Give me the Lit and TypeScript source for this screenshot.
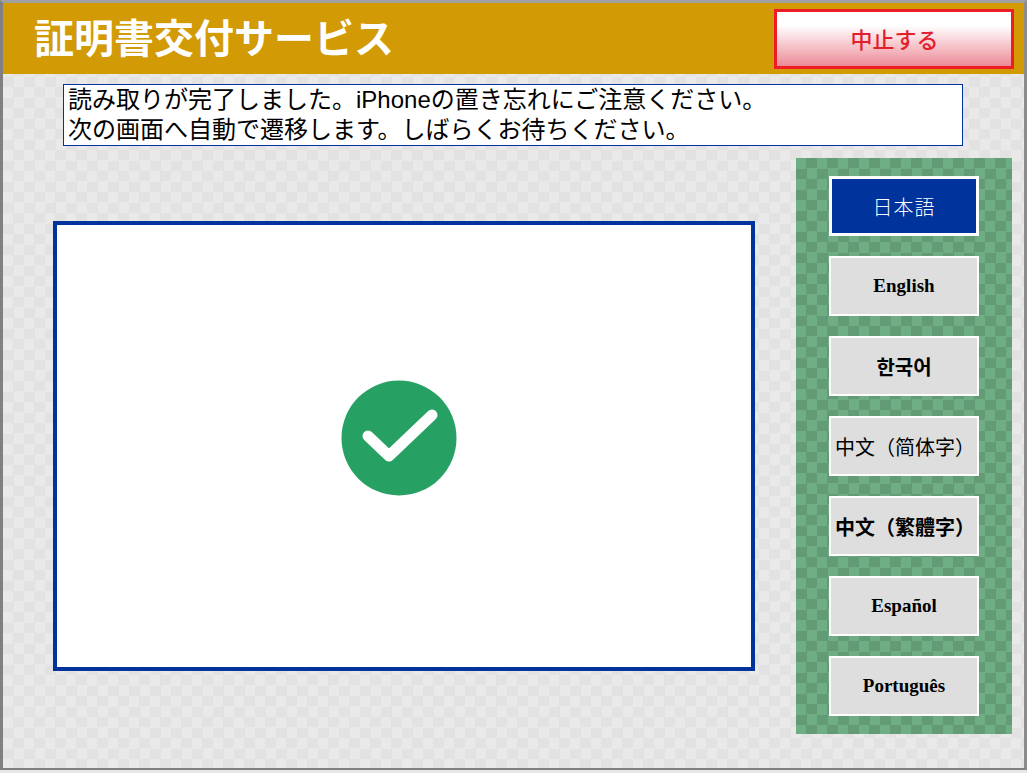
import { LitElement, html, css } from "lit";
import { customElement } from "lit/decorators.js";

const LANGS = [
  { t: "日本語", c: "sel ja" },
  { t: "English", c: "ser" },
  { t: "한국어", c: "ko" },
  { t: "中文（简体字）", c: "sc" },
  { t: "中文（繁體字）", c: "tc" },
  { t: "Español", c: "ser" },
  { t: "Português", c: "ser" },
];

@customElement("app-root")
export class AppRoot extends LitElement {
  static styles = css`
    :host { display: block; width: 1027px; height: 773px; overflow: hidden; background: #e8e8e8; }
    .frame {
      box-sizing: border-box; width: 1027px; height: 770px;
      border-style: solid; border-width: 3px 3px 2px 3px;
      border-color: #a0a0a0 #8c8c8c #808080 #808080;
      background-color: #e9e9e9;
      background-image: conic-gradient(#e2e2e2 25%, transparent 0 50%, #e2e2e2 0 75%, transparent 0);
      background-size: 21px 21px;
      display: flex; flex-direction: column;
      font-family: "Liberation Sans", "Noto Sans CJK JP", sans-serif;
    }
    .head {
      height: 71px; margin-top: 0; background: #d29a05; flex: none;
      display: flex; align-items: center; justify-content: space-between;
      padding: 0 10px 0 31px; box-sizing: border-box;
    }
    h1 { margin: 0; color: #fff; font-size: 40px; font-weight: 700; line-height: 1; font-family: "Liberation Sans", "Noto Sans CJK JP", sans-serif; }
    .stop {
      box-sizing: border-box; width: 240px; height: 60px; border: 3px solid #ee1c25;
      background: linear-gradient(#fff 0 25%, #ec8a96);
      color: #e2202c; font-size: 22px; font-weight: 500;
      display: flex; align-items: center; justify-content: center;
      font-family: "Noto Sans CJK JP", sans-serif; padding: 0;
    }
    .stop span { margin-top: -1px; margin-left: 1px; }
    .notice {
      box-sizing: border-box; width: 900px; height: 62px; margin: 10px 0 0 60px; flex: none;
      border: 1px solid #00339c; background: #fff; color: #000;
      font-size: 24px; line-height: 30px; padding: 0 4px;
      white-space: nowrap;
    }
    .body { display: flex; flex: 1; align-items: flex-start; }
    .main {
      box-sizing: border-box; width: 702px; height: 450px; margin: 75px 0 0 50px;
      border: 4px solid #00339c; background: #fff; flex: none;
      display: flex; align-items: center; justify-content: center;
    }
    .main svg { display: block; width: 116px; height: 116px; margin-top: -17px; margin-left: -11px; }
    .side {
      box-sizing: border-box; width: 216px; height: 576px; margin: 12px 0 0 41px; flex: none;
      background-color: #6fae84;
      background-image: conic-gradient(#649b77 25%, transparent 0 50%, #649b77 0 75%, transparent 0);
      background-size: 21px 21px;
      display: flex; flex-direction: column; gap: 20px; align-items: center;
      padding: 18px 0 0 0;
    }
    .lang {
      box-sizing: border-box; width: 150px; height: 60px; border: 2px solid #fff;
      background: #dedede; color: #000; font-size: 20px;
      display: flex; align-items: center; justify-content: center;
      white-space: nowrap; padding: 0; margin: 0;
      font-family: "Liberation Serif", "Noto Serif CJK JP", "Noto Sans CJK JP", serif;
    }
    .lang.sel { background: #00339c; color: #fff; border-width: 3px; }
    .lang.ser { font-size: 19px; font-weight: 700; font-family: "Liberation Serif", serif; }
    .lang.ko { font-weight: 700; font-family: "Noto Sans CJK KR", sans-serif; }
    .lang.sc { font-family: "Noto Sans CJK SC", serif; font-weight: 400; letter-spacing: 0; justify-content: flex-start; padding-left: 4px; }
    .lang.tc { font-family: "Noto Sans CJK TC", sans-serif; font-weight: 700; justify-content: flex-start; padding-left: 4px; }
    .lang.ja { font-family: "Noto Sans CJK JP", serif; font-weight: 300; letter-spacing: 1px; }
  `;

  render() {
    return html`<div class="frame">
      <div class="head">
        <h1>証明書交付サービス</h1>
        <button class="stop"><span>中止する</span></button>
      </div>
      <div class="notice">読み取りが完了しました。iPhoneの置き忘れにご注意ください。<br />次の画面へ自動で遷移します。しばらくお待ちください。</div>
      <div class="body">
        <div class="main">
          <svg viewBox="0 0 116 116">
            <circle cx="58" cy="58" r="57.5" fill="#27a064" />
            <path d="M27 56 L48 76 L91 35" fill="none" stroke="#fff" stroke-width="11" stroke-linecap="round" stroke-linejoin="round" />
          </svg>
        </div>
        <div class="side">
          ${LANGS.map((l) => html`<button class="lang ${l.c}">${l.t}</button>`)}
        </div>
      </div>
    </div>`;
  }
}
